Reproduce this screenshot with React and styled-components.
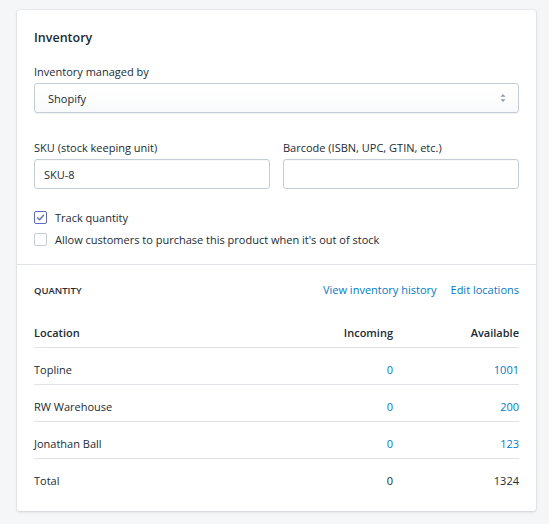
import styled, { createGlobalStyle } from 'styled-components'

const GlobalStyle = createGlobalStyle`
  body {
    margin: 0;
    background: #f4f6f8;
    font-family: "Open Sans", "Noto Sans", sans-serif;
    color: #212b36;
  }
`

const Page = styled.div`
  padding: 10px 13px 12px 17px;
`

const Card = styled.div`
  background: #fff;
  border-radius: 3px;
  box-shadow: 0 0 0 1px rgba(63, 63, 68, 0.05), 0 1px 3px 0 rgba(63, 63, 68, 0.15);
`

const Section = styled.div`
  padding: ${(p) => p.$pad || '18px 17px 14px'};
  & + & {
    border-top: 1px solid #dfe3e8;
  }
`

const Title = styled.h2`
  margin: 0 0 16px;
  font-size: 12.5px;
  line-height: 20px;
  font-weight: 600;
`

const Label = styled.label`
  display: block;
  font-size: 11px;
  line-height: 16px;
  margin-bottom: 3px;
`

const Field = styled.div`
  flex: 1;
  margin-bottom: ${(p) => p.$mb || 0}px;
`

const Row = styled.div`
  display: flex;
  gap: 13px;
`

const Select = styled.div`
  height: 30px;
  box-sizing: border-box;
  border: 1px solid #c4cdd5;
  border-radius: 3px;
  background: linear-gradient(180deg, #fff, #f9fafb);
  box-shadow: 0 1px 0 0 rgba(22, 29, 37, 0.05);
  display: flex;
  align-items: center;
  justify-content: space-between;
  padding: 0 11px 0 13px;
  font-size: 11px;
`

const Input = styled.div`
  height: 30px;
  box-sizing: border-box;
  border: 1px solid #c4cdd5;
  border-radius: 3px;
  box-shadow: inset 0 1px 0 0 rgba(99, 115, 129, 0.05);
  display: flex;
  align-items: center;
  padding: 0 9px;
  font-size: 11px;
`

const Checks = styled.div`
  margin-top: 17px;
`

const CheckRow = styled.div`
  display: flex;
  align-items: center;
  gap: 8px;
  height: 22px;
  font-size: 11px;
`

const Box = styled.span`
  width: 13px;
  height: 13px;
  box-sizing: border-box;
  border: 1px solid ${(p) => (p.$checked ? '#5c6ac4' : '#c4cdd5')};
  border-radius: 2px;
  display: flex;
  align-items: center;
  justify-content: center;
  background: #fff;
`

const Header = styled.div`
  display: flex;
  align-items: baseline;
  justify-content: space-between;
  line-height: 20px;
  margin-bottom: 10px;
`

const Caps = styled.span`
  font-size: 9.5px;
  font-weight: 600;
  text-transform: uppercase;
`

const Links = styled.div`
  display: flex;
  gap: 14px;
`

const Link = styled.a`
  color: #007ace;
  font-size: 11px;
  text-decoration: none;
`

const Table = styled.div`
  display: grid;
  grid-template-columns: 1fr 100px 126px;
  font-size: 11px;
`

const Cell = styled.div`
  padding: 14px 0 6px;
  line-height: 16px;
  text-align: ${(p) => (p.$right ? 'right' : 'left')};
  font-weight: ${(p) => (p.$head ? 600 : 400)};
  color: ${(p) => (p.$link ? '#007ace' : '#212b36')};
  border-bottom: ${(p) => (p.$last ? 'none' : '1px solid #dfe3e8')};
`

const rows = [
  { name: 'Topline', incoming: 0, available: 1001 },
  { name: 'RW Warehouse', incoming: 0, available: 200 },
  { name: 'Jonathan Ball', incoming: 0, available: 123 },
]

function Arrows() {
  return (
    <svg width="8" height="12" viewBox="0 0 8 12">
      <path d="M4 2 L6.5 4.8 H1.5 Z" fill="#919eab" />
      <path d="M4 10 L6.5 7.2 H1.5 Z" fill="#919eab" />
    </svg>
  )
}

function Check() {
  return (
    <svg width="9" height="9" viewBox="0 0 9 9">
      <path d="M1.5 4.8 L3.6 6.8 L7.6 2.2" fill="none" stroke="#5c6ac4" strokeWidth="1.3" strokeLinecap="round" strokeLinejoin="round" />
    </svg>
  )
}

export default function App() {
  const total = rows.reduce((s, r) => s + r.available, 0)
  return (
    <>
      <GlobalStyle />
      <Page>
        <Card>
          <Section>
            <Title>Inventory</Title>
            <Field $mb={27}>
              <Label>Inventory managed by</Label>
              <Select>
                <span>Shopify</span>
                <Arrows />
              </Select>
            </Field>
            <Row>
              <Field>
                <Label>SKU (stock keeping unit)</Label>
                <Input>SKU-8</Input>
              </Field>
              <Field>
                <Label>Barcode (ISBN, UPC, GTIN, etc.)</Label>
                <Input />
              </Field>
            </Row>
            <Checks>
              <CheckRow>
                <Box $checked>
                  <Check />
                </Box>
                Track quantity
              </CheckRow>
              <CheckRow>
                <Box />
                Allow customers to purchase this product when it's out of stock
              </CheckRow>
            </Checks>
          </Section>
          <Section $pad="15px 17px 16px">
            <Header>
              <Caps>Quantity</Caps>
              <Links>
                <Link href="#">View inventory history</Link>
                <Link href="#">Edit locations</Link>
              </Links>
            </Header>
            <Table>
              <Cell $head>Location</Cell>
              <Cell $head $right>Incoming</Cell>
              <Cell $head $right>Available</Cell>
              {rows.map((r) => (
                <>
                  <Cell key={r.name}>{r.name}</Cell>
                  <Cell $right $link>{r.incoming}</Cell>
                  <Cell $right $link>{r.available}</Cell>
                </>
              ))}
              <Cell $last>Total</Cell>
              <Cell $last $right>0</Cell>
              <Cell $last $right>{total}</Cell>
            </Table>
          </Section>
        </Card>
      </Page>
    </>
  )
}
